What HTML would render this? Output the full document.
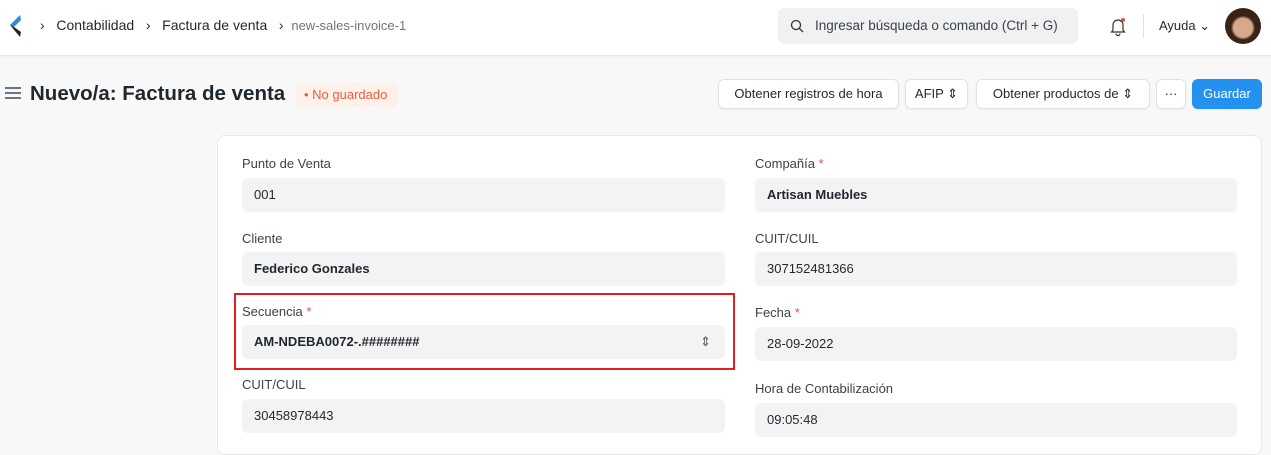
<!DOCTYPE html><html><head><meta charset="utf-8"><style>
*{box-sizing:border-box;margin:0;padding:0}
body{width:1271px;height:444px;overflow:hidden;background:#f8f8f8;font-family:"Liberation Sans",sans-serif;color:#1f272e;position:relative}
.nav{position:absolute;left:0;top:0;width:1271px;height:56px;background:#fff;border-bottom:1px solid #e6e8ea;box-shadow:0 1px 3px rgba(0,0,0,.05)}
.a{position:absolute;white-space:nowrap}
.btn{position:absolute;top:79px;height:30px;background:#fff;border:1px solid #dfe2e5;border-radius:6px;font-size:13px;line-height:28px;text-align:center;box-shadow:0 1px 2px rgba(0,0,0,.05)}
.card{position:absolute;left:217px;top:135px;width:1045px;height:320px;background:#fff;border:1px solid #e6e8ea;border-radius:8px}
.lbl{position:absolute;font-size:13px;color:#3b4249}
.inp{position:absolute;height:34px;background:#f3f3f4;border-radius:6px;font-size:13px;line-height:34px;padding-left:12px;color:#1f272e}
.req{color:#e24c4c}
</style></head><body>
<div class="nav">
<svg class="a" style="left:8px;top:14px" width="14" height="24" viewBox="0 0 14 24"><path d="M12 1 L2 11 L6 13 L13 6Z" fill="#2c8ad8"/><path d="M2 11 L12 23 L13 18 L6 13Z" fill="#1f272e"/></svg>
<div class="a" style="left:40px;top:17px;font-size:14px">›&nbsp;&nbsp; Contabilidad &nbsp;&nbsp;› &nbsp;&nbsp;Factura de venta &nbsp;&nbsp;› &nbsp;<span style="color:#6c7680;font-size:13px">new-sales-invoice-1</span></div>
<div class="a" style="left:778px;top:8px;width:300px;height:36px;background:#f0f1f2;border-radius:6px"></div>
<svg class="a" style="left:790px;top:19px" width="14" height="14" viewBox="0 0 14 14"><circle cx="6" cy="6" r="4.5" fill="none" stroke="#333" stroke-width="1.3"/><path d="M9.3 9.3L13 13" stroke="#333" stroke-width="1.3"/></svg>
<div class="a" style="left:815px;top:18px;font-size:13.5px;color:#3b4249">Ingresar búsqueda o comando (Ctrl + G)</div>
<svg class="a" style="left:1109px;top:16px" width="18" height="20" viewBox="0 0 18 20"><path d="M4 14V9a5 5 0 0 1 10 0v5l1.5 2h-13z M7 17.5a2 2 0 0 0 4 0" fill="none" stroke="#333" stroke-width="1.2"/><circle cx="14" cy="4" r="2" fill="#e24c4c"/></svg>
<div class="a" style="left:1143px;top:14px;width:1px;height:24px;background:#e0e0e0"></div>
<div class="a" style="left:1159px;top:18px;font-size:13px">Ayuda ⌄</div>
<div class="a" style="left:1225px;top:8px;width:36px;height:36px;border-radius:50%;background:radial-gradient(circle at 50% 55%,#d9a88a 0 35%,#3a2218 45%)"></div>
</div>
<div class="a" style="left:5px;top:87px;width:16px;height:2px;background:#6c7680;box-shadow:0 5px 0 #6c7680,0 10px 0 #6c7680"></div>
<div class="a" style="left:30px;top:82px;font-size:20.5px;font-weight:bold">Nuevo/a: Factura de venta</div>
<div class="a" style="left:296px;top:83px;height:24px;width:102px;background:#fff0ea;border-radius:5px;font-size:13px;color:#e8613c;line-height:24px;padding-left:8px">• No guardado</div>
<div class="btn" style="left:718px;width:181px">Obtener registros de hora</div>
<div class="btn" style="left:905px;width:63px">AFIP ⇕</div>
<div class="btn" style="left:976px;width:174px">Obtener productos de ⇕</div>
<div class="btn" style="left:1156px;width:30px">···</div>
<div class="btn" style="left:1192px;width:70px;background:#2490ef;border-color:#2490ef;color:#fff">Guardar</div>
<div class="card"></div>
<div class="lbl" style="left:242px;top:156px">Punto de Venta</div>
<div class="inp" style="left:242px;top:178px;width:483px">001</div>
<div class="lbl" style="left:242px;top:231px">Cliente</div>
<div class="inp" style="left:242px;top:252px;width:483px;font-weight:bold">Federico Gonzales</div>
<div class="a" style="left:234px;top:293px;width:501px;height:77px;border:2px solid #e02020"></div>
<div class="lbl" style="left:242px;top:304px">Secuencia <span class="req">*</span></div>
<div class="inp" style="left:242px;top:325px;width:483px;font-weight:bold">AM-NDEBA0072-.########<span style="position:absolute;right:14px;color:#555;font-weight:normal">⇕</span></div>
<div class="lbl" style="left:242px;top:377px">CUIT/CUIL</div>
<div class="inp" style="left:242px;top:399px;width:483px">30458978443</div>
<div class="lbl" style="left:755px;top:156px">Compañía <span class="req">*</span></div>
<div class="inp" style="left:755px;top:178px;width:482px;font-weight:bold">Artisan Muebles</div>
<div class="lbl" style="left:755px;top:231px">CUIT/CUIL</div>
<div class="inp" style="left:755px;top:252px;width:482px">307152481366</div>
<div class="lbl" style="left:755px;top:305px">Fecha <span class="req">*</span></div>
<div class="inp" style="left:755px;top:327px;width:482px">28-09-2022</div>
<div class="lbl" style="left:755px;top:381px">Hora de Contabilización</div>
<div class="inp" style="left:755px;top:403px;width:482px">09:05:48</div>
</body></html>
